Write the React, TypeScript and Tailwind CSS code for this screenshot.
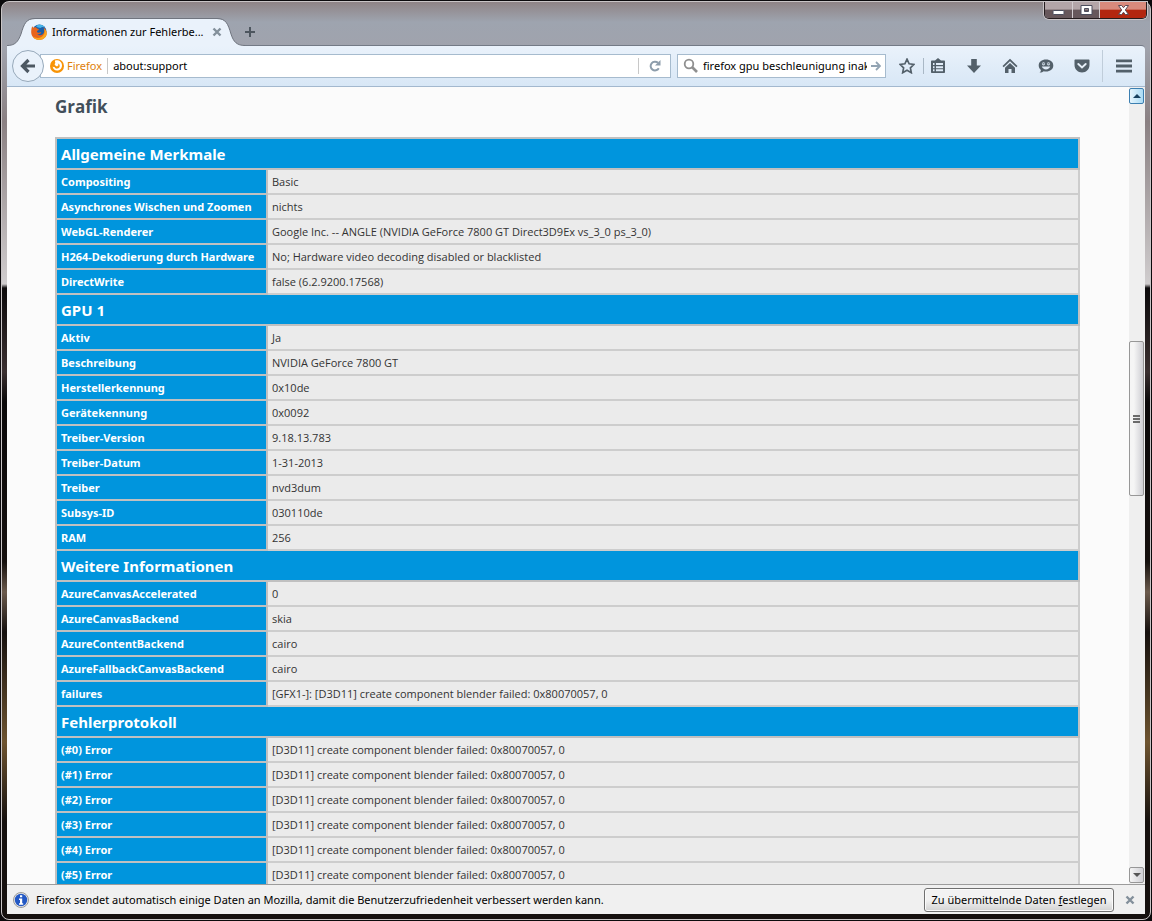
import { Fragment } from "react";
import type { JSX, ReactNode } from "react";

interface Section {
  title: string;
  rows: [string, string][];
}

const gfxError = "[D3D11] create component blender failed: 0x80070057, 0";

const sections: Section[] = [
  {
    title: "Allgemeine Merkmale",
    rows: [
      ["Compositing", "Basic"],
      ["Asynchrones Wischen und Zoomen", "nichts"],
      ["WebGL-Renderer", "Google Inc. -- ANGLE (NVIDIA GeForce 7800 GT Direct3D9Ex vs_3_0 ps_3_0)"],
      ["H264-Dekodierung durch Hardware", "No; Hardware video decoding disabled or blacklisted"],
      ["DirectWrite", "false (6.2.9200.17568)"],
    ],
  },
  {
    title: "GPU 1",
    rows: [
      ["Aktiv", "Ja"],
      ["Beschreibung", "NVIDIA GeForce 7800 GT"],
      ["Herstellerkennung", "0x10de"],
      ["Gerätekennung", "0x0092"],
      ["Treiber-Version", "9.18.13.783"],
      ["Treiber-Datum", "1-31-2013"],
      ["Treiber", "nvd3dum"],
      ["Subsys-ID", "030110de"],
      ["RAM", "256"],
    ],
  },
  {
    title: "Weitere Informationen",
    rows: [
      ["AzureCanvasAccelerated", "0"],
      ["AzureCanvasBackend", "skia"],
      ["AzureContentBackend", "cairo"],
      ["AzureFallbackCanvasBackend", "cairo"],
      ["failures", "[GFX1-]: [D3D11] create component blender failed: 0x80070057, 0"],
    ],
  },
  {
    title: "Fehlerprotokoll",
    rows: [0, 1, 2, 3, 4, 5].map((n): [string, string] => [`(#${n}) Error`, gfxError]),
  },
];

function FirefoxLogo(): JSX.Element {
  return (
    <svg viewBox="0 0 16 16" className="size-4 shrink-0">
      <circle cx="8.4" cy="7.4" r="7" fill="#1c5fa8" />
      <path d="M5 2.2C7.500 0 12 .2 14 3.500 12 2.500 10.500 3 9.500 4 8 3.500 6 3.500 5 2.200Z" fill="#45b4e8" />
      <path d="M1.300 2.200c.3.800.8 1.200 1.500 1.500C4.200 3 5.500 3.500 6 4.500c1 .2 1.800.3 1.800 1-.2.800-1.600 1-1.900 1.700.2 1 .8 1.600 2 1.500 1-.1 1.600-.6 2.400-.2-.8 1.700-2.500 2-4.200 1.500 1.800 2.200 6 1.600 7-2 .6-2-.1-3.800-.8-4.800 2.600 1.600 3.900 4.500 3.200 7.600C14.600 14 11.600 16 8.200 16 3.800 16 .2 12.700.2 8.300.2 6 .5 3.800 1.300 2.200Z" fill="#e8641b" />
      <path d="M15.500 10.800C14.600 14 11.600 16 8.200 16 5.500 16 3 14.500 1.500 12.300c3.500 2.700 9.500 2.500 11.700-2.500.9-2 .2-4.800-.2-5 2.300 1.800 3 3.500 2.500 6Z" fill="#f9a71c" />
    </svg>
  );
}

function IdentityIcon(): JSX.Element {
  return (
    <svg viewBox="0 0 14 14" className="size-3.5 shrink-0">
      <circle cx="7" cy="7" r="7" fill="#f89406" />
      <path d="M5.200 1.500C9 .8 12 3 12 6.500c0 3-2.300 5-5 5-2.500 0-4.300-1.800-4.300-4 .8.800 1.400.9 2 .6C5 9.300 6 9.800 7.200 9.600 9 9.300 10 8 9.700 6.500 9.500 5 8.500 4.600 7.600 4.500 7 6 5.500 5.500 5.400 6.500 4.400 6 4.500 4.600 5.500 4 4.800 3 4.800 2 5.200 1.500Z" fill="#fff" />
      <path d="M5.600 4.600 7.800 4.200 8.600 6 7 7.400 5.400 6.500Z" fill="#fff" />
    </svg>
  );
}

function CloseCross(): JSX.Element {
  return (
    <svg viewBox="0 0 10 10" className="size-2.5">
      <path d="M1.500 1.500l7 7M8.500 1.500l-7 7" stroke="#83909b" strokeWidth="2.400" />
    </svg>
  );
}

function ToolbarButton({ label, children }: { label: string; children: ReactNode }): JSX.Element {
  return (
    <button type="button" aria-label={label} className="flex h-6 w-9 items-center justify-center">
      <svg viewBox="0 0 16 16" className="size-4" fill="#53606a">
        {children}
      </svg>
    </button>
  );
}

function WindowControls(): JSX.Element {
  return (
    <div className="-mr-0.5 flex h-[17px] overflow-hidden rounded-b-[5px] border border-t-0 border-[#241c1e] shadow-[0_0_0_1px_#c9c3c6]">
      <button type="button" aria-label="Minimieren" className="flex w-7 items-center justify-center border-r border-[#d3cdd0] bg-linear-to-b from-[#b3a5a8] from-45% to-[#67575b] to-50%">
        <svg viewBox="0 0 13 12" className="h-3 w-[13px]">
          <rect x="1" y="6.500" width="11" height="4" rx="1" fill="#fff" stroke="#4d4f5f" />
        </svg>
      </button>
      <button type="button" aria-label="Maximieren" className="flex w-[27px] items-center justify-center border-r border-[#d3cdd0] bg-linear-to-b from-[#b3a5a8] from-45% to-[#67575b] to-50%">
        <svg viewBox="0 0 13 12" className="h-3 w-[13px]">
          <path fillRule="evenodd" d="M1 1.500h11v9H1ZM4.500 4.500v3h4v-3Z" fill="#fff" stroke="#4d4f5f" />
        </svg>
      </button>
      <button type="button" aria-label="Schließen" className="flex w-[46px] items-center justify-center bg-linear-to-b from-[#d98a7c] from-45% to-[#b3260f] to-50%">
        <svg viewBox="0 0 13 12" className="h-3 w-[13px]">
          <path d="M1.500 1.500h3.200l1.800 2.200 1.800-2.200h3.200L8.300 6l3.200 4.500H8.300L6.500 8.200l-1.800 2.300H1.500L4.700 6Z" fill="#fff" stroke="#5b4a54" />
        </svg>
      </button>
    </div>
  );
}

function TitleBar(): JSX.Element {
  return (
    <header className="flex h-[43px] shrink-0 items-end justify-between">
      <div className="flex items-end">
        <div className="relative z-10 -mb-px flex h-7 w-[238px] items-center">
          <svg viewBox="0 0 238 28" className="absolute inset-0 h-full w-full">
            <path d="M0 27.500C8 27.500 11 24 14 16 17 6 19 1 28 1h182c9 0 11 5 14 15 2.500 8 6 11.500 14 11.500V28H0Z" fill="#eaf2fb" />
            <path d="M0 27.500C8 27.500 11 24 14 16 17 6 19 .5 28 .5h182c9 0 11 5.500 14 15.500 2.500 8 6 11.500 14 11.500" fill="none" stroke="#70757f" />
          </svg>
          <div className="relative flex flex-1 items-center pr-[23px] pl-6">
            <FirefoxLogo />
            <span className="ml-[5px] flex-1 whitespace-nowrap text-black">Informationen zur Fehlerbe...</span>
            <button type="button" aria-label="Tab schließen" className="flex">
              <CloseCross />
            </button>
          </div>
        </div>
        <button type="button" aria-label="Neuer Tab" className="mb-[7px] -ml-px flex size-3">
          <svg viewBox="0 0 12 12" className="size-3">
            <path d="M6 1v10M1 6h10" stroke="#4d565f" strokeWidth="2" />
          </svg>
        </button>
      </div>
      <div className="self-start">
        <WindowControls />
      </div>
    </header>
  );
}

function NavBar(): JSX.Element {
  return (
    <nav className="flex h-[42px] shrink-0 items-center rounded-tr-sm border-t border-b border-t-[#737a86] border-b-[#a3b8ce] bg-linear-to-b from-[#eaf2fb] to-[#d8e7f6] pl-[5px]">
      <button type="button" aria-label="Zurück" className="z-10 flex size-8 shrink-0 items-center justify-center rounded-full border border-[#97a9ba] bg-[#eaf2fb]">
        <svg viewBox="0 0 16 16" className="size-4">
          <path d="M8.500 2 2.500 8l6 6M3 8h12" fill="none" stroke="#4d5862" strokeWidth="3.200" />
        </svg>
      </button>
      <div className="-ml-1 flex h-6 min-w-0 flex-1 items-center border border-[#a6bbce] bg-white">
        <div className="ml-[9px] flex h-4 items-center gap-[3px] border-r border-[#c8c8c8] pr-[5px] text-[#e07f0a]">
          <IdentityIcon />
          Firefox
        </div>
        <input aria-label="Adresse" defaultValue="about:support" className="min-w-0 flex-1 pl-[5px] text-black outline-none" />
        <button type="button" aria-label="Neu laden" className="flex h-4 w-8 items-center justify-center border-l border-[#c8c8c8]">
          <svg viewBox="0 0 12 12" className="size-3">
            <path d="M9.800 8.300A4.400 4.400 0 1 1 9 2.800" fill="none" stroke="#8d9dab" strokeWidth="2" />
            <path d="M11.500 0v5.500H6Z" fill="#8d9dab" />
          </svg>
        </button>
      </div>
      <div className="ml-1.5 flex h-6 w-[209px] shrink-0 items-center border border-[#a6bbce] bg-white pr-1 pl-[5px]">
        <svg viewBox="0 0 16 16" className="size-4 shrink-0">
          <circle cx="6" cy="6" r="4.300" fill="none" stroke="#8f8f8f" strokeWidth="1.800" />
          <path d="M9 9l5 5" stroke="#8f8f8f" strokeWidth="2.600" />
        </svg>
        <input aria-label="Suchen" defaultValue="firefox gpu beschleunigung inaktiv" className="ml-1 min-w-0 flex-1 text-black outline-none" />
        <button type="button" aria-label="Suche starten" className="ml-1">
          <svg viewBox="0 0 10 10" className="size-2.5">
            <path d="M0 5h8M5 1l4 4-4 4" fill="none" stroke="#93a4b3" strokeWidth="1.800" />
          </svg>
        </button>
      </div>
      <div className="flex shrink-0 items-center pl-[3px]">
        <ToolbarButton label="Lesezeichen">
          <path d="M8 1.200l2.100 4.600 4.900.6-3.600 3.400.9 4.900L8 12.300l-4.300 2.400.9-4.900L1 6.400l4.900-.6Z" fill="none" stroke="#53606a" strokeWidth="1.700" />
        </ToolbarButton>
        <div className="-mr-1 -ml-0.5 h-4 w-px bg-[#a9b8c6]" />
        <ToolbarButton label="Lesezeichen anzeigen">
          <path fillRule="evenodd" d="M5 2.500 8 0l3 2.500h3c.6 0 1 .4 1 1V14c0 .6-.4 1-1 1H2c-.6 0-1-.4-1-1V3.500c0-.6.4-1 1-1ZM3 5v2h1.500V5Zm3 0v2h7V5ZM3 8.200v2h1.500v-2Zm3 0v2h7v-2Zm-3 3v2h1.500v-2Zm3 0v2h7v-2Z" />
        </ToolbarButton>
        <ToolbarButton label="Downloads">
          <path d="M5.200 1h5.600v6.500H15L8 15 1 7.500h4.200Z" />
        </ToolbarButton>
        <ToolbarButton label="Startseite">
          <path d="M8 .8 15.500 8l-1.200 1.200L8 3.300 1.700 9.200.5 8Z" />
          <path d="M8 5l5 4.700V15H9.500v-4h-3v4H3V9.700Z" />
        </ToolbarButton>
        <ToolbarButton label="Chat">
          <path d="M8 1.500c4.300 0 7.300 2.500 7.300 6s-3 6-7.300 6c-.8 0-1.600-.1-2.300-.3-1 .9-2.700 1.500-4.200 1.300 1-.7 1.400-1.500 1.400-2.600C1.500 10.800.7 9.300.7 7.500c0-3.500 3-6 7.300-6Z" />
          <circle cx="5.500" cy="5.800" r="1.600" fill="#dfeaf5" />
          <circle cx="10.500" cy="5.800" r="1.600" fill="#dfeaf5" />
          <path d="M4.500 5.800h2M9.500 5.800h2" stroke="#53606a" />
          <path d="M3.800 8.600h8.400c-.7 1.900-2.200 2.800-4.200 2.800s-3.500-.9-4.200-2.800Z" fill="#dfeaf5" />
        </ToolbarButton>
        <ToolbarButton label="Pocket">
          <path d="M1.500 1.500h13c.6 0 1 .4 1 1V7c0 4.200-3.300 7.500-7.500 7.500S.5 11.200.5 7V2.500c0-.6.400-1 1-1Z" />
          <path d="M4.300 6 8 9.500 11.700 6" fill="none" stroke="#e6eff8" strokeWidth="1.900" strokeLinecap="round" />
        </ToolbarButton>
      </div>
      <div className="ml-0.5 h-8 w-px bg-[#c0cdda]" />
      <div className="px-[3px]">
        <ToolbarButton label="Menü">
          <path d="M0 1.500h16v2.800H0ZM0 6.600h16v2.800H0ZM0 11.700h16v2.800H0Z" />
        </ToolbarButton>
      </div>
    </nav>
  );
}

function InfoTable(): JSX.Element {
  return (
    <table className="mt-[17px] w-full border-collapse border-2 border-[#c0c0c0] text-left">
      <tbody>
        {sections.map((section) => (
          <Fragment key={section.title}>
            <tr className="h-[31px]">
              <th colSpan={2} className="border-2 border-[#c0c0c0] bg-[#0095dd] px-1 py-0 text-[15px] font-bold text-white">
                {section.title}
              </th>
            </tr>
            {section.rows.map(([name, value]) => (
              <tr key={name} className="h-[25px]">
                <th scope="row" className="w-[211px] border-2 border-[#c0c0c0] bg-[#0095dd] px-1 py-0 font-bold whitespace-nowrap text-white">
                  {name}
                </th>
                <td className="border-2 border-[#cdcdcd] bg-[#ebebeb] px-1 py-0 font-['Open_Sans','Noto_Sans',sans-serif] text-[#333]">
                  {value}
                </td>
              </tr>
            ))}
          </Fragment>
        ))}
      </tbody>
    </table>
  );
}

function ScrollBar(): JSX.Element {
  return (
    <div aria-hidden="true" className="flex w-4 shrink-0 flex-col bg-[#efefef] pt-px pr-px">
      <div className="flex h-4 items-center justify-center rounded-xs border border-[#3c7fb1] bg-linear-to-r from-[#e6f5fd] to-[#a9dbf5]">
        <div className="border-x-4 border-b-4 border-x-transparent border-b-[#17415f]" />
      </div>
      <div className="grow-[237] basis-0" />
      <div className="flex grow-[154] basis-0 flex-col items-center justify-center gap-px rounded-xs border border-[#979797] bg-linear-to-r from-[#f5f5f5] from-30% to-[#cfcfd4]">
        <div className="h-0.5 w-[7px] bg-[#6b6b6b]" />
        <div className="h-0.5 w-[7px] bg-[#6b6b6b]" />
        <div className="h-0.5 w-[7px] bg-[#6b6b6b]" />
      </div>
      <div className="grow-[371] basis-0" />
      <div className="mb-px flex h-4 items-center justify-center rounded-xs border border-[#979797] bg-linear-to-r from-[#f5f5f5] to-[#cfcfd4]">
        <div className="border-x-4 border-t-4 border-x-transparent border-t-[#555]" />
      </div>
    </div>
  );
}

function NotificationBar(): JSX.Element {
  return (
    <footer className="flex h-[30px] shrink-0 items-center border-t border-[#9c9c9c] bg-[#f0f0f0] pr-2.5 pl-1.5 text-black">
      <svg viewBox="0 0 16 16" className="size-4 shrink-0">
        <circle cx="8" cy="8" r="7.500" fill="#e8e8e8" stroke="#9a9a9a" />
        <circle cx="8" cy="8" r="6.200" fill="#2358c4" />
        <path d="M7 3.200h2.200v2H7ZM6 6.500h3.200v4.800h1v1.400H6v-1.400h1V7.900H6Z" fill="#fff" />
      </svg>
      <p className="ml-[7px] flex-1">
        Firefox sendet automatisch einige Daten an Mozilla, damit die Benutzerzufriedenheit verbessert werden kann.
      </p>
      <button type="button" className="h-6 w-[190px] rounded-[3px] border border-[#707070] bg-linear-to-b from-[#f2f2f2] from-50% to-[#d2d2d2] whitespace-nowrap shadow-[inset_0_0_0_1px_#fbfbfb]">
        Zu übermittelnde Daten <u>f</u>estlegen
      </button>
      <button type="button" aria-label="Hinweis schließen" className="ml-[11px]">
        <CloseCross />
      </button>
    </footer>
  );
}

export default function App(): JSX.Element {
  return (
    <div className="flex h-screen flex-col overflow-hidden bg-[#0c0a0c] p-px font-['Noto_Sans','Open_Sans',sans-serif] text-[11px] leading-4">
      <div className="flex min-h-0 flex-1 flex-col rounded-lg border border-[#c9c5c6] bg-[linear-gradient(to_bottom,#8f8486_0,#9ea4af_20px,#a0a3ad_45px,#8a8082_120px,#d0cdce_282px,#0c0a0b_286px,#3a3030_370px,#0a0809_400px,#15100e_560px,#6b5a4c_590px,#15100e_630px,#6e5430_740px,#15100e_820px,#15100e_100%)] px-[5px] pb-[5px]">
        <TitleBar />
        <NavBar />
        <div className="flex min-h-0 flex-1 bg-[#fbfbfb]">
          <main className="min-w-0 flex-1 overflow-hidden pt-[7px] pr-[49px] pl-12">
            <h1 className="font-['Open_Sans','Noto_Sans',sans-serif] text-[17px] leading-[26px] font-bold text-[#424f5a]">Grafik</h1>
            <InfoTable />
          </main>
          <ScrollBar />
        </div>
        <NotificationBar />
      </div>
    </div>
  );
}
